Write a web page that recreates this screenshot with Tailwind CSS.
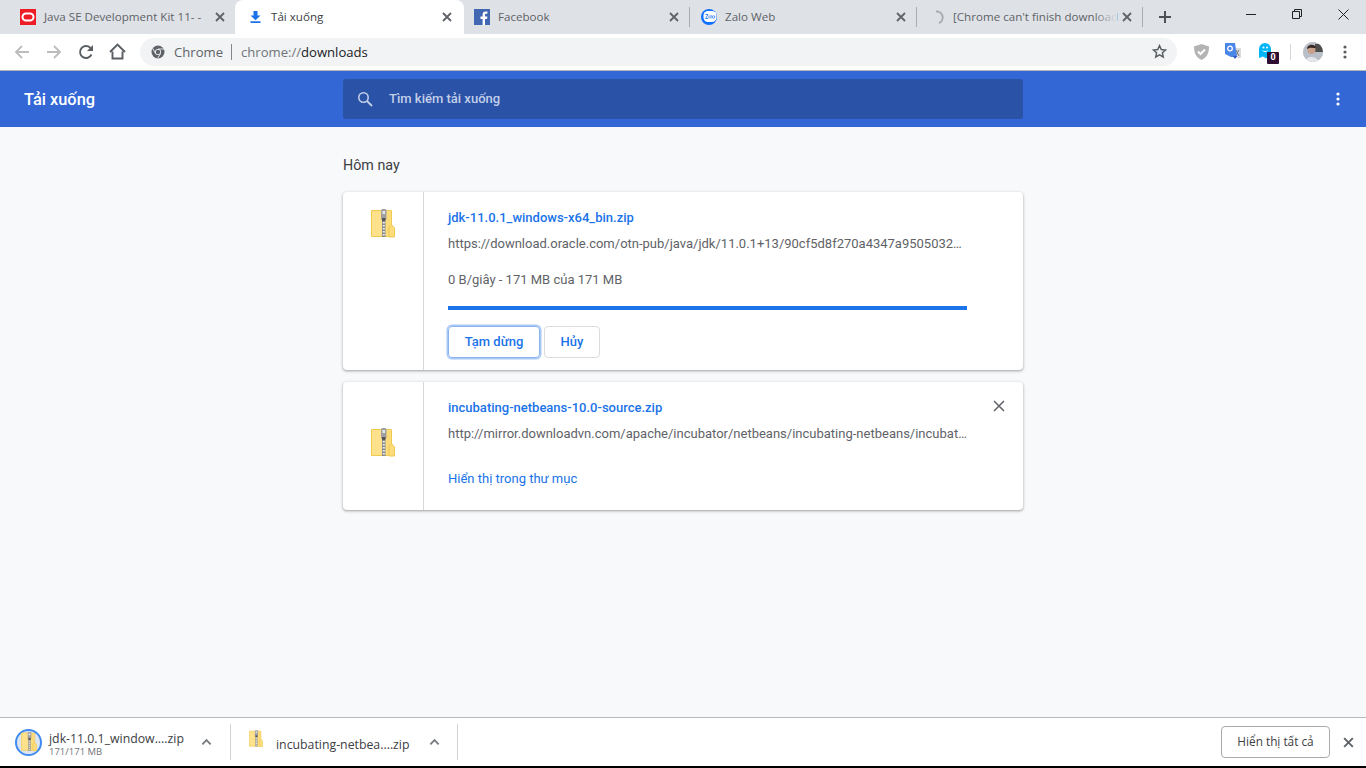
<!DOCTYPE html>
<html lang="vi">
<head>
<meta charset="utf-8">
<title>Tải xuống</title>
<script src="https://cdn.jsdelivr.net/npm/@tailwindcss/browser@4"></script>
</head>
<body class="m-0 overflow-hidden">
<svg class="hidden" width="0" height="0">
  <symbol id="zip" viewBox="0 0 24 30">
    <path d="M.5 1.500h20v26H.5z" fill="#fde28b" stroke="#f0c94f"/>
    <path d="M15.500 3h4v23h-4z" fill="#fbd76f" opacity=".7"/>
    <rect x="10" y="0" width="5.500" height="11" rx="1.500" fill="#a0a0a0"/>
    <rect x="11.500" y="2" width="2.500" height="3" fill="#e6e6e6"/>
    <rect x="11" y="9" width="3.500" height="3" fill="#555"/>
    <path d="M11 12h3.500v16H11z" fill="#8a8a8a"/>
    <path d="M11.800 13h2v1.500h-2zM11.800 16h2v1.500h-2zM11.800 19h2v1.500h-2zM11.800 22h2v1.500h-2zM11.800 25h2v1.500h-2z" fill="#eee"/>
    <path d="M18 28v-9l2.500-3.500L23.500 19v9z" fill="#fcdc7c" stroke="#f0c94f"/>
  </symbol>
  <symbol id="x" viewBox="0 0 12 12"><path d="M2 2l8 8M10 2l-8 8" fill="none" stroke="currentColor" stroke-width="1.800"/></symbol>
  <symbol id="xthin" viewBox="0 0 14 14"><path d="M2 2l10 10M12 2L2 12" fill="none" stroke="currentColor" stroke-width="1.500"/></symbol>
  <symbol id="chev" viewBox="0 0 12 8"><path d="M1.500 6.500L6 2l4.500 4.500" fill="none" stroke="currentColor" stroke-width="2"/></symbol>
</svg>

<div class="flex h-[768px] w-[1366px] flex-col bg-[#f8f9fa] font-['Roboto',sans-serif]">

  <!-- tab strip -->
  <div class="flex h-[34px] shrink-0 items-center bg-[#dee1e6] font-['Open_Sans',sans-serif] text-[11.6px] text-[#5f6368]">
    <div class="flex h-full w-[235px] shrink-0 items-center pl-[20px]">
      <svg class="h-4 w-4 shrink-0" viewBox="0 0 16 16"><rect width="16" height="16" fill="#ee1c25"/><rect x="2.500" y="4.500" width="11" height="7" rx="3.500" fill="none" stroke="#fff" stroke-width="2"/></svg>
      <span class="ml-2 w-[162px] whitespace-nowrap">Java SE Development Kit 11- -</span>
      <svg class="ml-[8px] h-[12px] w-[12px] text-[#5f6368]"><use href="#x"/></svg>
    </div>
    <div class="flex h-full w-[229px] shrink-0 items-center rounded-t-[8px] bg-white pl-[15px] text-[#3c4043]">
      <svg class="h-[12px] w-[11px] shrink-0" viewBox="0 0 11 12"><path d="M3.500 0h4v4.500H10.500L5.500 9.200.5 4.500h3zM.5 10.300h10V12H.5z" fill="#1a73e8"/></svg>
      <span class="ml-[10px] w-[170px]">Tải xuống</span>
      <svg class="h-[12px] w-[12px] text-[#5f6368]"><use href="#x"/></svg>
    </div>
    <div class="flex h-full w-[226px] shrink-0 items-center pl-[10px]">
      <svg class="h-4 w-4 shrink-0" viewBox="0 0 16 16"><rect width="16" height="16" fill="#4267b2"/><path d="M11 16v-6h2l.4-2.500H11V6c0-.8.300-1.200 1.200-1.200h1.200V2.600c-.5-.1-1.200-.1-1.800-.1-1.900 0-3 1.100-3 3v2H6.500V10h2.100v6z" fill="#fff"/></svg>
      <span class="ml-2 w-[170px]">Facebook</span>
      <svg class="h-[12px] w-[12px] text-[#5f6368]"><use href="#x"/></svg>
      <span class="ml-[9px] h-[20px] w-px bg-[#a9acb0]"></span>
    </div>
    <div class="flex h-full w-[227px] shrink-0 items-center pl-[11px]">
      <svg class="h-4 w-4 shrink-0" viewBox="0 0 16 16"><circle cx="8" cy="8" r="8" fill="#0f6fff"/><rect x="2.500" y="2" width="13" height="11" rx="4.500" fill="#fff"/><path d="M4.500 5.500h2.500L4.500 9.500H7M8 6.500v3M10 6v3.500" fill="none" stroke="#2a7bf0" stroke-width=".9"/><circle cx="12.500" cy="8" r="1.300" fill="none" stroke="#2a7bf0" stroke-width=".8"/></svg>
      <span class="ml-2 w-[170px]">Zalo Web</span>
      <svg class="h-[12px] w-[12px] text-[#5f6368]"><use href="#x"/></svg>
      <span class="ml-[9px] h-[20px] w-px bg-[#a9acb0]"></span>
    </div>
    <div class="flex h-full w-[226px] shrink-0 items-center pl-[15px]">
      <svg class="h-[14px] w-[14px] shrink-0" viewBox="0 0 14 14"><path d="M4 1.500A6 6 0 0 1 7 13" fill="none" stroke="#a8abaf" stroke-width="2"/></svg>
      <span class="relative ml-[7px] w-[164px] whitespace-nowrap">[Chrome can't finish download<span class="absolute inset-y-0 right-0 w-[24px] bg-gradient-to-r from-transparent to-[#dee1e6]"></span></span>
      <svg class="ml-[4px] h-[12px] w-[12px] text-[#5f6368]"><use href="#x"/></svg>
      <span class="ml-[9px] h-[20px] w-px bg-[#a9acb0]"></span>
    </div>
    <svg class="ml-[16px] h-[12px] w-[12px] shrink-0 text-[#4d5155]" viewBox="0 0 12 12"><path d="M6 0v12M0 6h12" stroke="currentColor" stroke-width="2"/></svg>
    <div class="ml-auto flex h-full w-[138px] shrink-0 items-start text-[#222]">
      <span class="flex h-[28px] w-[46px] items-center justify-center"><span class="h-px w-[10px] bg-[#222]"></span></span>
      <span class="flex h-[28px] w-[46px] items-center justify-center"><svg class="h-[10px] w-[10px]" viewBox="0 0 10 10"><path d="M.5 2.500h7v7h-7zM2.500 2.500V.5h7v7h-2" fill="none" stroke="#222"/></svg></span>
      <span class="flex h-[28px] w-[46px] items-center justify-center"><svg class="h-[11px] w-[11px]" viewBox="0 0 11 11"><path d="M.5.5l10 10M10.500.5l-10 10" stroke="#222"/></svg></span>
    </div>
  </div>

  <!-- toolbar -->
  <div class="flex h-[37px] shrink-0 items-center border-b border-[#b4b4b4] bg-white pb-[1px]">
    <svg class="ml-[14px] h-[16px] w-[16px] shrink-0" viewBox="0 0 16 16"><path d="M15 8H2M8 2L2 8l6 6" fill="none" stroke="#bcbcbc" stroke-width="1.800"/></svg>
    <svg class="ml-[16px] h-[16px] w-[16px] shrink-0" viewBox="0 0 16 16"><path d="M1 8h13M8 2l6 6-6 6" fill="none" stroke="#bcbcbc" stroke-width="1.800"/></svg>
    <svg class="ml-[16px] h-[16px] w-[16px] shrink-0" viewBox="0 0 16 16"><path d="M13.500 10.500A6 6 0 1 1 12.300 3.800L14 5.500" fill="none" stroke="#5a5e63" stroke-width="1.900"/><path d="M15 1v6H9z" fill="#5a5e63"/></svg>
    <svg class="ml-[15px] h-[17px] w-[17px] shrink-0" viewBox="0 0 17 17"><path d="M3.500 8.500V15.500h10V8.500M1 9l7.500-7.500L16 9" fill="none" stroke="#5a5e63" stroke-width="1.900"/></svg>
    <div class="ml-[14px] flex h-[28px] w-[1037px] shrink-0 items-center rounded-full bg-[#f1f3f4] font-['Open_Sans',sans-serif] text-[13.1px]">
      <svg class="ml-[11px] h-[14px] w-[14px] shrink-0" viewBox="0 0 14 14"><circle cx="7" cy="7" r="6.500" fill="#5f6368"/><circle cx="7" cy="7" r="3" fill="#f1f3f4"/><circle cx="7" cy="7" r="2.200" fill="#5f6368"/><path d="M7 4h6M4.500 8.500L1.800 3.500M9.500 8.500L6.800 13" stroke="#f1f3f4" stroke-width=".9"/></svg>
      <span class="ml-[9px] translate-y-px text-[#5f6368]">Chrome</span>
      <span class="ml-[8px] h-[16px] w-px bg-[#80868b]"></span>
      <span class="ml-[9px] translate-y-px text-[#70757a]">chrome://<span class="text-[#202124]">downloads</span></span>
      <svg class="ml-auto mr-[10px] h-[15px] w-[15px] shrink-0" viewBox="0 0 16 16"><path d="M8 1.800l1.900 4.100 4.500.5-3.300 3 .9 4.400L8 11.600l-4 2.200.9-4.400-3.300-3 4.500-.5z" fill="none" stroke="#5a5e63" stroke-width="1.600"/></svg>
    </div>
    <svg class="ml-[17px] h-[16px] w-[15px] shrink-0" viewBox="0 0 15 16"><path d="M7.500 0L15 2.500c0 6-1.500 10.500-7.500 13.500C1.500 13 0 8.500 0 2.500z" fill="#b4b4b4"/><path d="M4 7.500l2.500 2.500L11 5.500" fill="none" stroke="#fff" stroke-width="2"/></svg>
    <span class="relative ml-[16px] h-[17px] w-[16px] shrink-0">
      <svg class="h-[17px] w-[16px]" viewBox="0 0 16 17"><path d="M8 5h8v10H8z" fill="#dcdcdc"/><path d="M11 7l3 6M14 7l-3 5" stroke="#777" stroke-width="1"/><path d="M0 0h10l2 14H6v0L0 11z" fill="#4a86e8"/><path d="M8 13l2 3 2-3z" fill="#2a56c6"/><circle cx="5" cy="5.500" r="2.300" fill="none" stroke="#fff" stroke-width="1.300"/></svg>
    </span>
    <span class="relative ml-[18px] h-[20px] w-[20px] shrink-0">
      <svg class="absolute left-0 top-0 h-[17px] w-[13px]" viewBox="0 0 13 17"><path d="M0 7a6 6 0 0 1 12 0v9l-3-1.500-2 2-3-2-4 1.500z" fill="#00b6f6"/><circle cx="4.500" cy="5.500" r="1" fill="#fff"/><circle cx="8" cy="5.500" r="1" fill="#fff"/><path d="M3.500 8.500c1 1.500 4 1.500 5 0" fill="none" stroke="#fff"/></svg>
      <span class="absolute left-[8px] top-[10px] flex h-[12px] w-[12px] items-center justify-center rounded-[1px] bg-[#2e0f32] text-[9px] font-bold leading-none text-white">0</span>
    </span>
    <span class="ml-[11px] h-[16px] w-px bg-[#d5d7da]"></span>
    <span class="ml-[12px] h-[20px] w-[20px] shrink-0 overflow-hidden rounded-full bg-[#cfc8c4]">
      <svg class="h-full w-full" viewBox="0 0 20 20"><rect width="20" height="20" fill="#b9bfc9"/><rect x="12" y="2" width="8" height="8" fill="#4f4d4c"/><circle cx="8.500" cy="8" r="4" fill="#c9a08c"/><path d="M4 7c0-5 8-6 9-1-3 0-6-1-9 1z" fill="#3a2a26"/><path d="M2 20c1-6 11-7 14 0z" fill="#e4e6ec"/></svg>
    </span>
    <svg class="ml-[20px] h-[14px] w-[4px] shrink-0" viewBox="0 0 4 14"><circle cx="2" cy="2" r="1.600" fill="#5a5e63"/><circle cx="2" cy="7" r="1.600" fill="#5a5e63"/><circle cx="2" cy="12" r="1.600" fill="#5a5e63"/></svg>
  </div>

  <!-- downloads header -->
  <div class="flex h-[56px] shrink-0 items-center bg-[#3367d6] text-white">
    <div class="w-[343px] shrink-0 translate-y-px pl-[24px] text-[16.4px] font-medium">Tải xuống</div>
    <div class="flex h-[40px] w-[680px] shrink-0 items-center rounded-[2px] bg-[#2a52a7] text-[13px] font-medium text-[#c3cfe9]">
      <svg class="ml-[14px] h-[16px] w-[16px] shrink-0" viewBox="0 0 16 16"><circle cx="6.500" cy="6.500" r="4.700" fill="none" stroke="#c3cfe9" stroke-width="1.600"/><path d="M10 10l5 5" stroke="#c3cfe9" stroke-width="1.800"/></svg>
      <span class="ml-[16px]">Tìm kiếm tải xuống</span>
    </div>
    <svg class="ml-[313px] h-[14px] w-[4px] shrink-0" viewBox="0 0 4 14"><circle cx="2" cy="2" r="1.600" fill="#fff"/><circle cx="2" cy="7" r="1.600" fill="#fff"/><circle cx="2" cy="12" r="1.600" fill="#fff"/></svg>
  </div>

  <!-- content -->
  <main class="mx-auto flex w-[680px] flex-1 flex-col">
    <h2 class="mt-[30px] h-[35px] text-[14.3px] font-normal leading-[17px] text-[#3c4043]">Hôm nay</h2>

    <section class="flex h-[178px] rounded-[4px] bg-white shadow-[0_1px_2px_rgba(60,64,67,.3),0_1px_3px_1px_rgba(60,64,67,.15)]">
      <div class="flex w-[81px] shrink-0 justify-center border-r border-[#d8d8d8] pt-[17px]">
        <svg class="h-[30px] w-[24px]"><use href="#zip"/></svg>
      </div>
      <div class="flex-1 pl-[24px] pt-[17px]">
        <div class="text-[13px] font-medium leading-[17px] text-[#1a73e8]">jdk-11.0.1_windows-x64_bin.zip</div>
        <div class="mt-[9px] text-[13px] leading-[17px] text-[#5f6368]">https://download.oracle.com/otn-pub/java/jdk/11.0.1+13/90cf5d8f270a4347a9505032…</div>
        <div class="mt-[19px] text-[13px] leading-[17px] text-[#5f6368]">0 B/giây - 171 MB của 171 MB</div>
        <div class="mt-[18px] h-[4px] w-[519px] bg-[#1a73e8]"></div>
        <div class="mt-[16px] flex items-center gap-[4px] text-[13px] font-medium text-[#1a73e8]">
          <button class="h-[32px] w-[92px] rounded-[4px] border border-[#8ab4f0] font-medium shadow-[0_0_0_1.500px_#a9c8f5]">Tạm dừng</button>
          <button class="h-[32px] w-[56px] rounded-[4px] border border-[#dadce0] font-medium">Hủy</button>
        </div>
      </div>
    </section>

    <section class="relative mt-[12px] flex h-[128px] rounded-[4px] bg-white shadow-[0_1px_2px_rgba(60,64,67,.3),0_1px_3px_1px_rgba(60,64,67,.15)]">
      <div class="flex w-[81px] shrink-0 items-center justify-center border-r border-[#d8d8d8] pb-[6px]">
        <svg class="h-[30px] w-[24px]"><use href="#zip"/></svg>
      </div>
      <div class="flex-1 pl-[24px] pt-[17px]">
        <div class="text-[13px] font-medium leading-[17px] text-[#1a73e8]">incubating-netbeans-10.0-source.zip</div>
        <div class="mt-[9px] text-[13px] leading-[17px] text-[#5f6368]">http://mirror.downloadvn.com/apache/incubator/netbeans/incubating-netbeans/incubat…</div>
        <div class="mt-[28px] text-[13px] leading-[17px] text-[#1a73e8]">Hiển thị trong thư mục</div>
      </div>
      <svg class="absolute right-[17px] top-[17px] h-[14px] w-[14px] text-[#5f6368]"><use href="#xthin"/></svg>
    </section>
  </main>

  <!-- download shelf -->
  <footer class="flex h-[49px] shrink-0 items-center border-t border-[#b9b9b9] bg-white font-['Open_Sans',sans-serif]">
    <div class="flex h-[36px] w-[231px] shrink-0 items-center border-r border-[#d0d2d4]">
      <span class="ml-[15px] flex h-[27px] w-[27px] shrink-0 items-center justify-center rounded-full border-2 border-[#3f8bf0] bg-[#dce4ef]">
        <svg class="h-[20px] w-[16px]"><use href="#zip"/></svg>
      </span>
      <span class="ml-[7px] mt-[4px] flex w-[142px] flex-col">
        <span class="text-[12.3px] leading-[15px] text-[#3c4043]">jdk-11.0.1_window....zip</span>
        <span class="text-[9.500px] leading-[12px] text-[#70757a]">171/171 MB</span>
      </span>
      <svg class="ml-[10px] h-[8px] w-[11px] text-[#777a7e]"><use href="#chev"/></svg>
    </div>
    <div class="flex h-[36px] w-[227px] shrink-0 items-center border-r border-[#d0d2d4]">
      <svg class="ml-[18px] mb-[6px] h-[20px] w-[14px] shrink-0"><use href="#zip"/></svg>
      <span class="ml-[13px] mt-[6px] w-[146px] text-[12.3px] text-[#3c4043]">incubating-netbea....zip</span>
      <svg class="ml-[7px] h-[8px] w-[11px] text-[#777a7e]"><use href="#chev"/></svg>
    </div>
    <button class="ml-auto h-[32px] w-[109px] rounded-[4px] border border-[#a8abaf] text-[11.800px] font-medium text-[#3c4043]">Hiển thị tất cả</button>
    <svg class="ml-[12px] mr-[11px] h-[13px] w-[13px] text-[#5f6368]"><use href="#x"/></svg>
  </footer>
  <div class="h-[2px] shrink-0 bg-black"></div>
</div>
</body>
</html>
